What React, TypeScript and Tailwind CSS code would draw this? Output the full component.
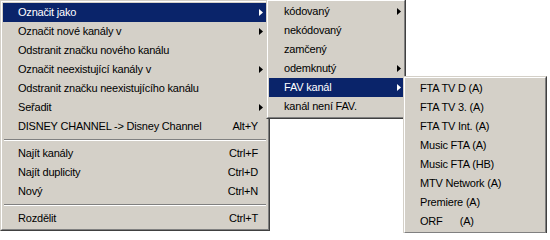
import React from "react";

type MenuItem =
  | { label: string; shortcut?: string; sub?: boolean; active?: boolean }
  | "sep";

const MAIN_ITEMS: MenuItem[] = [
  { label: "Označit jako", sub: true, active: true },
  { label: "Označit nové kanály v", sub: true },
  { label: "Odstranit značku nového kanálu" },
  { label: "Označit neexistující kanály v", sub: true },
  { label: "Odstranit značku neexistujícího kanálu" },
  { label: "Seřadit", sub: true },
  { label: "DISNEY CHANNEL -> Disney Channel", shortcut: "Alt+Y" },
  "sep",
  { label: "Najít kanály", shortcut: "Ctrl+F" },
  { label: "Najít duplicity", shortcut: "Ctrl+D" },
  { label: "Nový", shortcut: "Ctrl+N" },
  "sep",
  { label: "Rozdělit", shortcut: "Ctrl+T" },
];

const MARK_ITEMS: MenuItem[] = [
  { label: "kódovaný", sub: true },
  { label: "nekódovaný" },
  { label: "zamčený" },
  { label: "odemknutý", sub: true },
  { label: "FAV kanál", sub: true, active: true },
  { label: "kanál není FAV." },
];

const FAV_ITEMS: MenuItem[] = [
  { label: "FTA TV D (A)" },
  { label: "FTA TV 3. (A)" },
  { label: "FTA TV Int. (A)" },
  { label: "Music FTA (A)" },
  { label: "Music FTA (HB)" },
  { label: "MTV Network (A)" },
  { label: "Premiere (A)" },
  { label: "ORF\u00a0\u00a0\u00a0\u00a0\u00a0\u00a0(A)" },
];

function Arrow({ white }: { white?: boolean }) {
  return (
    <svg width="4" height="7" viewBox="0 0 4 7" className="block">
      <path d="M0 0 L4 3.5 L0 7 Z" fill={white ? "#ffffff" : "#000000"} />
    </svg>
  );
}

function Panel({
  items,
  className,
  rowPad,
}: {
  items: MenuItem[];
  className?: string;
  rowPad: string;
}) {
  return (
    <div
      className={`bg-[#d4d0c8] border border-t-[#d4d0c8] border-l-[#d4d0c8] border-r-[#404040] border-b-[#404040] ${className ?? ""}`}
    >
      <div className="border border-t-white border-l-white border-r-[#808080] border-b-[#808080] p-px">
        {items.map((item, i) =>
          item === "sep" ? (
            <div key={i} className="h-[8px] px-px pt-[3px]">
              <div className="border-t border-t-[#808080] border-b border-b-white" />
            </div>
          ) : (
            <div
              key={i}
              className={`h-[19px] flex items-center ${rowPad} ${
                item.active ? "bg-[#0a246a] text-white" : "text-black"
              }`}
            >
              <span className="flex-1 whitespace-nowrap">{item.label}</span>
              {item.shortcut && (
                <span className="whitespace-nowrap pr-px">{item.shortcut}</span>
              )}
              <span className="w-[4px] flex">
                {item.sub && <Arrow white={item.active} />}
              </span>
            </div>
          )
        )}
      </div>
    </div>
  );
}

export default function App() {
  return (
    <div
      className="relative w-[550px] h-[233px] bg-white overflow-hidden text-[11px] leading-none tracking-[-0.2px]"
      style={{ fontFamily: '"Liberation Sans", Arial, sans-serif' }}
    >
      <Panel items={MAIN_ITEMS} className="w-[270px]" rowPad="pl-[15px] pr-[4px]" />

      {/* Submenu: Označit jako */}
      <Panel
        items={MARK_ITEMS}
        className="absolute left-[266px] -top-px w-[140px]"
        rowPad="pl-[15px] pr-[2px]"
      />

      {/* Submenu: FAV kanál */}
      <Panel
        items={FAV_ITEMS}
        className="absolute left-[403px] top-[76px] w-[144px]"
        rowPad="pl-[14px] pr-[2px]"
      />
    </div>
  );
}
